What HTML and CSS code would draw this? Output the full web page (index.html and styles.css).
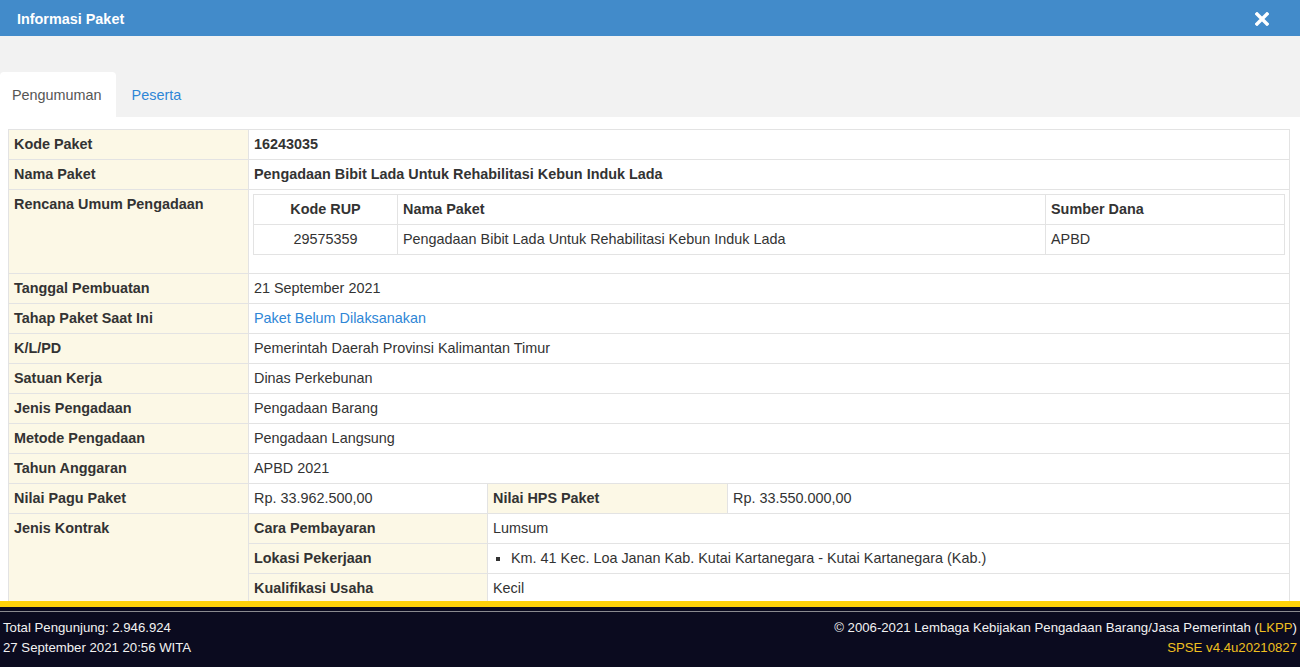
FILE: index.html
```html
<!DOCTYPE html>
<html lang="id">
<head>
<meta charset="utf-8">
<title>Informasi Paket</title>
<link rel="stylesheet" href="styles.css">
</head>
<body>
<div class="modal-header">
  <span class="modal-title">Informasi Paket</span>
  <span class="close-btn" aria-label="Tutup">
    <svg width="14" height="14" viewBox="0 0 14 14"><path d="M2 2 L12 12 M12 2 L2 12" stroke="#fff" stroke-width="3.4" stroke-linecap="square"/></svg>
  </span>
</div>
<div class="modal-body">
  <ul class="tabs">
    <li class="tab active">Pengumuman</li>
    <li class="tab"><a href="#">Peserta</a></li>
  </ul>
  <div class="tab-content">
    <table class="info">
      <colgroup>
        <col class="c1"><col class="c2"><col class="c3"><col>
      </colgroup>
      <tr><th>Kode Paket</th><td colspan="3"><strong>16243035</strong></td></tr>
      <tr><th>Nama Paket</th><td colspan="3"><strong>Pengadaan Bibit Lada Untuk Rehabilitasi Kebun Induk Lada</strong></td></tr>
      <tr><th>Rencana Umum Pengadaan</th><td colspan="3" class="rup-cell">
        <table class="rup">
          <colgroup><col class="r1"><col class="r2"><col></colgroup>
          <tr><th class="center">Kode RUP</th><th>Nama Paket</th><th>Sumber Dana</th></tr>
          <tr><td class="center">29575359</td><td>Pengadaan Bibit Lada Untuk Rehabilitasi Kebun Induk Lada</td><td>APBD</td></tr>
        </table>
      </td></tr>
      <tr><th>Tanggal Pembuatan</th><td colspan="3">21 September 2021</td></tr>
      <tr><th>Tahap Paket Saat Ini</th><td colspan="3"><a href="#">Paket Belum Dilaksanakan</a></td></tr>
      <tr><th>K/L/PD</th><td colspan="3">Pemerintah Daerah Provinsi Kalimantan Timur</td></tr>
      <tr><th>Satuan Kerja</th><td colspan="3">Dinas Perkebunan</td></tr>
      <tr><th>Jenis Pengadaan</th><td colspan="3">Pengadaan Barang</td></tr>
      <tr><th>Metode Pengadaan</th><td colspan="3">Pengadaan Langsung</td></tr>
      <tr><th>Tahun Anggaran</th><td colspan="3">APBD 2021</td></tr>
      <tr><th>Nilai Pagu Paket</th><td>Rp. 33.962.500,00</td><th>Nilai HPS Paket</th><td>Rp. 33.550.000,00</td></tr>
      <tr><th rowspan="3">Jenis Kontrak</th><th>Cara Pembayaran</th><td colspan="2">Lumsum</td></tr>
      <tr><th>Lokasi Pekerjaan</th><td colspan="2"><ul class="loc"><li>Km. 41 Kec. Loa Janan Kab. Kutai Kartanegara - Kutai Kartanegara (Kab.)</li></ul></td></tr>
      <tr><th>Kualifikasi Usaha</th><td colspan="2">Kecil</td></tr>
    </table>
  </div>
</div>
<footer class="footer">
  <div class="footer-inner">
    <div class="f-left">
      <div>Total Pengunjung: 2.946.924</div>
      <div>27 September 2021 20:56 WITA</div>
    </div>
    <div class="f-right">
      <div>© 2006-2021 Lembaga Kebijakan Pengadaan Barang/Jasa Pemerintah (<span class="gold">LKPP</span>)</div>
      <div class="gold">SPSE v4.4u20210827</div>
    </div>
  </div>
</footer>
</body>
</html>
```
FILE: styles.css
```css
html, body {
  margin: 0;
  padding: 0;
  height: 100%;
  overflow: hidden;
}
body {
  font-family: "Liberation Sans", Arial, sans-serif;
  font-size: 14.4px;
  color: #333;
  background: #f2f2f2;
}
.modal-header {
  height: 36px;
  background: #428bca;
  display: flex;
  align-items: center;
  justify-content: space-between;
  padding: 0 31px 0 17px;
}
.modal-title {
  color: #fff;
  font-weight: bold;
  margin-top: 2px;
}
.close-btn {
  display: flex;
  align-items: center;
  margin-top: 2px;
}
.modal-body {
  padding-top: 36px;
}
.tabs {
  list-style: none;
  margin: 0;
  padding: 0;
  display: flex;
  gap: 4px;
  height: 45px;
}
.tab {
  padding: 1px 14px 0 12px;
  line-height: 45px;
  color: #555;
  border-radius: 4px 4px 0 0;
}
.tab.active {
  background: #fff;
}
.tab a {
  color: #2e86d6;
  text-decoration: none;
}
.tab-content {
  background: #fff;
  padding: 12px 10px 0 8px;
  height: 538px;
  box-sizing: border-box;
}
table {
  border-collapse: collapse;
}
.info {
  width: 100%;
  table-layout: fixed;
}
.c1 { width: 240px; }
.c2 { width: 239px; }
.c3 { width: 240px; }
.info th, .info td {
  border: 1px solid #e3e3e3;
  padding: 5px 5px;
  line-height: 19px;
  text-align: left;
  vertical-align: top;
}
.info th {
  background: #fcf8e6;
  font-weight: bold;
}
.info td {
  background: #fff;
}
.info td.rup-cell {
  padding: 4px 4px 5px 4px;
}
.info a {
  color: #2e86d6;
  text-decoration: none;
}
.rup {
  width: 100%;
  margin: 0 0 13px 0;
  table-layout: fixed;
}
.r1 { width: 144px; }
.r2 { width: 648px; }
.rup th, .rup td {
  border: 1px solid #e3e3e3;
  padding: 5px 5px;
  line-height: 19px;
  text-align: left;
  background: #fff;
}
.rup th {
  font-weight: bold;
}
.rup .center {
  text-align: center;
}
.loc {
  margin: 0;
  padding-left: 18px;
  list-style: square;
}
.footer {
  position: fixed;
  left: 0;
  right: 0;
  bottom: 0;
  height: 60px;
  border-top: 6px solid #fdd20a;
  background: #0b0b1f;
}
.footer-inner {
  margin-top: 4px;
  border-top: 1px solid #8a8a8f;
  display: flex;
  justify-content: space-between;
  padding: 6px 3px 0 3px;
  font-size: 13.2px;
  line-height: 20px;
  color: #f2f2f2;
}
.f-right {
  text-align: right;
}
.gold {
  color: #f0c020;
}
```
